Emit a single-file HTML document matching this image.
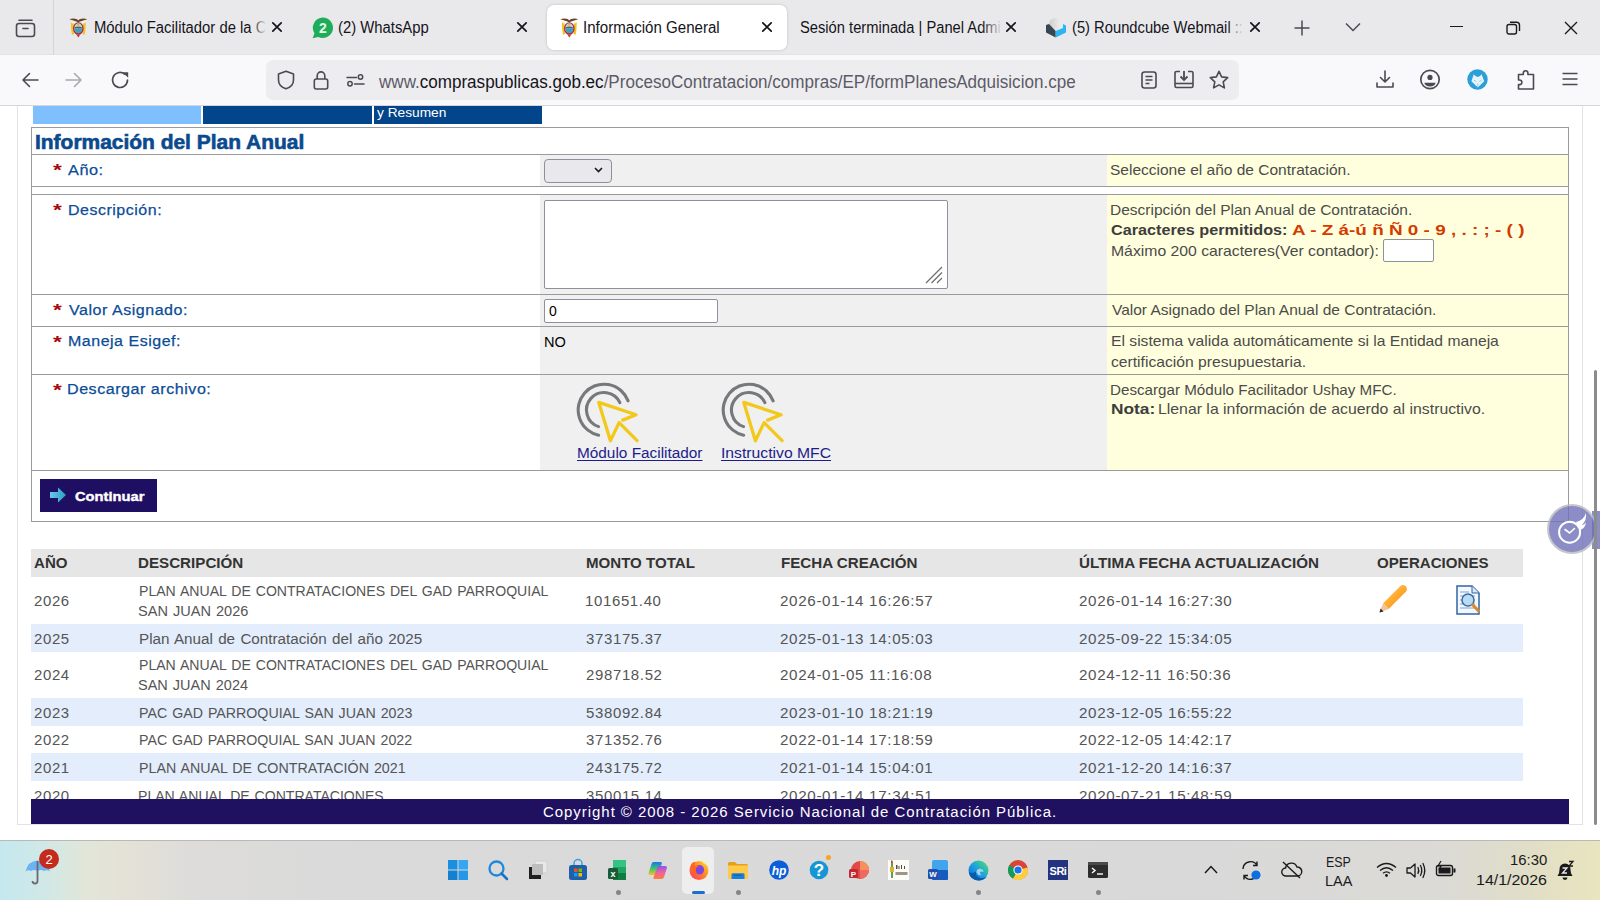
<!DOCTYPE html>
<html><head><meta charset="utf-8"><title>Información General</title><style>
*{margin:0;padding:0;box-sizing:border-box}
html,body{width:1600px;height:900px;overflow:hidden;background:#fff;position:relative;font-family:"Liberation Sans",sans-serif}
.a{position:absolute}
.t{position:absolute;white-space:nowrap;transform-origin:0 0}
svg{position:absolute;overflow:visible}
</style></head><body><div class="a" style="left:0px;top:0px;width:1600px;height:55px;background:#e9e9ec;"></div>
<div class="a" style="left:0px;top:54px;width:1600px;height:1px;background:#e2e2e5;"></div>
<div class="a" style="left:53px;top:0px;width:1px;height:55px;background:#d4d4d9;"></div>
<svg style="left:15px;top:17px" width="21" height="21" viewBox="0 0 21 21"><rect x="1.5" y="6.5" width="18" height="13" rx="2.5" fill="none" stroke="#4a4a52" stroke-width="1.6"/><path d="M4 3.2h13" stroke="#4a4a52" stroke-width="1.6" stroke-linecap="round"/><path d="M8 11.5h5" stroke="#4a4a52" stroke-width="1.6" stroke-linecap="round"/></svg>
<div class="a" style="left:547px;top:5px;width:240px;height:45px;background:#ffffff;border-radius:7px;box-shadow:0 0 3px rgba(0,0,0,.18)"></div>
<svg style="left:69px;top:17px" width="19" height="21" viewBox="0 0 19 21"><path d="M0.3 2.3Q4 0.8 8 2.2L9.3 3.5 10.6 2.2Q14.6 0.8 18.3 2.3 14 3.6 10.5 4.8L9.3 5.6 8.1 4.8Q4.6 3.6 0.3 2.3Z" fill="#6a4220"/><path d="M1.8 5.5 L4.5 5 L5 17 L3 18 Q1.8 12 1.8 5.5Z" fill="#efc321"/><path d="M16.8 5.5 L14.1 5 L13.6 17 L15.6 18 Q16.8 12 16.8 5.5Z" fill="#efc321"/><path d="M2 4.5L5 4 5.5 6 3 6.5Z M16.6 4.5L13.6 4 13.1 6 15.6 6.5Z" fill="#f4f4f4"/><ellipse cx="9.3" cy="11.5" rx="5.3" ry="6.3" fill="#a8283a"/><ellipse cx="9.3" cy="11.3" rx="4" ry="5" fill="#b9dce8"/><path d="M5.3 10.5Q9.3 8.5 13.3 10.5V11.5H5.3Z" fill="#7a5a38"/><path d="M5.4 11.5H13.2Q13 15.5 9.3 16.3 5.6 15.5 5.4 11.5Z" fill="#3b9fc8"/><path d="M7.3 17.5L9.3 20.5 11.3 17.5Z" fill="#d42a3a"/><ellipse cx="9.3" cy="7.7" rx="1.2" ry=".7" fill="#f0a020"/></svg>
<div id="tab1" class="t" style="left:93.95px;top:19.32px;font-size:15.8px;line-height:17px;color:#15141a;font-weight:400;font-family:'Liberation Sans', sans-serif;transform:scaleX(0.9395);">Módulo Facilitador de la C</div>
<div class="a" style="left:252px;top:15px;width:20px;height:25px;background:linear-gradient(90deg,rgba(233,233,236,0),#e9e9ec 70%);"></div>
<svg style="left:271.3px;top:21.4px" width="12" height="12" viewBox="0 0 12 12"><path d="M1.8 1.8L10.2 10.2M10.2 1.8L1.8 10.2" stroke="#15141a" stroke-width="1.7" stroke-linecap="round"/></svg>
<svg style="left:312px;top:16.5px" width="22" height="22" viewBox="0 0 22 22"><path d="M10.8 0.6A10.2 10.2 0 1 1 6.2 19.9L0.6 21.3 2.5 16.3A10.2 10.2 0 0 1 10.8 0.6Z" fill="#1fad5b"/><text x="11" y="15.6" text-anchor="middle" font-family="Liberation Sans" font-weight="700" font-size="14" fill="#e6fbe9">2</text></svg>
<div id="tab2" class="t" style="left:338.45px;top:19.32px;font-size:15.8px;line-height:17px;color:#15141a;font-weight:400;font-family:'Liberation Sans', sans-serif;transform:scaleX(0.9392);">(2) WhatsApp</div>
<svg style="left:516px;top:21.4px" width="12" height="12" viewBox="0 0 12 12"><path d="M1.8 1.8L10.2 10.2M10.2 1.8L1.8 10.2" stroke="#15141a" stroke-width="1.7" stroke-linecap="round"/></svg>
<svg style="left:560px;top:17px" width="19" height="21" viewBox="0 0 19 21"><path d="M0.3 2.3Q4 0.8 8 2.2L9.3 3.5 10.6 2.2Q14.6 0.8 18.3 2.3 14 3.6 10.5 4.8L9.3 5.6 8.1 4.8Q4.6 3.6 0.3 2.3Z" fill="#6a4220"/><path d="M1.8 5.5 L4.5 5 L5 17 L3 18 Q1.8 12 1.8 5.5Z" fill="#efc321"/><path d="M16.8 5.5 L14.1 5 L13.6 17 L15.6 18 Q16.8 12 16.8 5.5Z" fill="#efc321"/><path d="M2 4.5L5 4 5.5 6 3 6.5Z M16.6 4.5L13.6 4 13.1 6 15.6 6.5Z" fill="#f4f4f4"/><ellipse cx="9.3" cy="11.5" rx="5.3" ry="6.3" fill="#a8283a"/><ellipse cx="9.3" cy="11.3" rx="4" ry="5" fill="#b9dce8"/><path d="M5.3 10.5Q9.3 8.5 13.3 10.5V11.5H5.3Z" fill="#7a5a38"/><path d="M5.4 11.5H13.2Q13 15.5 9.3 16.3 5.6 15.5 5.4 11.5Z" fill="#3b9fc8"/><path d="M7.3 17.5L9.3 20.5 11.3 17.5Z" fill="#d42a3a"/><ellipse cx="9.3" cy="7.7" rx="1.2" ry=".7" fill="#f0a020"/></svg>
<div id="tab3" class="t" style="left:582.74px;top:19.32px;font-size:15.8px;line-height:17px;color:#15141a;font-weight:400;font-family:'Liberation Sans', sans-serif;transform:scaleX(0.9550);">Información General</div>
<svg style="left:761px;top:21.4px" width="12" height="12" viewBox="0 0 12 12"><path d="M1.8 1.8L10.2 10.2M10.2 1.8L1.8 10.2" stroke="#15141a" stroke-width="1.7" stroke-linecap="round"/></svg>
<div id="tab4" class="t" style="left:799.56px;top:19.32px;font-size:15.8px;line-height:17px;color:#15141a;font-weight:400;font-family:'Liberation Sans', sans-serif;transform:scaleX(0.9310);">Sesión terminada | Panel Admi</div>
<div class="a" style="left:982px;top:15px;width:24px;height:25px;background:linear-gradient(90deg,rgba(233,233,236,0),#e9e9ec 85%);"></div>
<svg style="left:1004.7px;top:21.4px" width="12" height="12" viewBox="0 0 12 12"><path d="M1.8 1.8L10.2 10.2M10.2 1.8L1.8 10.2" stroke="#15141a" stroke-width="1.7" stroke-linecap="round"/></svg>
<svg style="left:1045px;top:16px" width="22" height="23" viewBox="0 0 22 23"><defs><linearGradient id="rb" x1="0" x2="1"><stop offset="0" stop-color="#cfcfcf"/><stop offset="1" stop-color="#ececec"/></linearGradient></defs><circle cx="9.8" cy="7.5" r="5.6" fill="url(#rb)"/><path d="M1 9L4 8 10.7 15V21.5L1 16.5Z" fill="#37474f"/><path d="M10.7 15L18 12V8L21 9.5V16.5L10.7 21.5Z" fill="#2cb5f5"/></svg>
<div id="tab5" class="t" style="left:1071.50px;top:19.32px;font-size:15.8px;line-height:17px;color:#15141a;font-weight:400;font-family:'Liberation Sans', sans-serif;transform:scaleX(0.9331);">(5) Roundcube Webmail ::</div>
<div class="a" style="left:1228px;top:15px;width:18px;height:25px;background:linear-gradient(90deg,rgba(233,233,236,0),#e9e9ec 85%);"></div>
<svg style="left:1249px;top:21.4px" width="12" height="12" viewBox="0 0 12 12"><path d="M1.8 1.8L10.2 10.2M10.2 1.8L1.8 10.2" stroke="#15141a" stroke-width="1.7" stroke-linecap="round"/></svg>
<svg style="left:1294px;top:20px" width="16" height="16" viewBox="0 0 16 16"><path d="M8 .5V15.5M.5 8H15.5" stroke="#4a4a52" stroke-width="1.5"/></svg>
<svg style="left:1345px;top:22px" width="16" height="10" viewBox="0 0 16 10"><path d="M1 1.5L8 8.5L15 1.5" fill="none" stroke="#4a4a52" stroke-width="1.5"/></svg>
<div class="a" style="left:1450px;top:26px;width:13px;height:1.4px;background:#1a1a1a;"></div>
<svg style="left:1506px;top:21px" width="15" height="14" viewBox="0 0 15 14"><rect x="1" y="3.5" width="9.5" height="9.5" rx="2" fill="none" stroke="#1a1a1a" stroke-width="1.4"/><path d="M4 1.2h6.5a3 3 0 0 1 3 3V10" fill="none" stroke="#1a1a1a" stroke-width="1.4"/></svg>
<svg style="left:1564px;top:21px" width="14" height="14" viewBox="0 0 14 14"><path d="M1 1L13 13M13 1L1 13" stroke="#1a1a1a" stroke-width="1.4"/></svg>
<div class="a" style="left:0px;top:55px;width:1600px;height:50px;background:#f9f9fb;"></div>
<div class="a" style="left:0px;top:105px;width:1600px;height:1px;background:#d6d6da;"></div>
<svg style="left:21px;top:72px" width="18" height="16" viewBox="0 0 18 16"><path d="M17 8H2M8.5 1.5L2 8l6.5 6.5" fill="none" stroke="#4a4a52" stroke-width="1.6" stroke-linecap="round" stroke-linejoin="round"/></svg>
<svg style="left:65px;top:72px" width="18" height="16" viewBox="0 0 18 16"><path d="M1 8H16M9.5 1.5L16 8l-6.5 6.5" fill="none" stroke="#a9a9ae" stroke-width="1.6" stroke-linecap="round" stroke-linejoin="round"/></svg>
<svg style="left:111px;top:71px" width="19" height="18" viewBox="0 0 19 18"><path d="M16.5 9A7.5 7.5 0 1 1 13.5 3" fill="none" stroke="#4a4a52" stroke-width="1.7" stroke-linecap="round"/><path d="M11.5 1.2L17.2 1.2L17.2 6.8Z" fill="#4a4a52"/></svg>
<div class="a" style="left:266px;top:60px;width:973px;height:40px;background:#ededf0;border-radius:7px"></div>
<svg style="left:277px;top:70px" width="18" height="20" viewBox="0 0 18 20"><path d="M9 1.2L16.5 4V10C16.5 14.5 13 17.5 9 18.8 5 17.5 1.5 14.5 1.5 10V4Z" fill="none" stroke="#4a4a52" stroke-width="1.6" stroke-linejoin="round"/></svg>
<svg style="left:313px;top:70px" width="16" height="20" viewBox="0 0 16 20"><rect x="1.3" y="9" width="13.4" height="10" rx="2" fill="none" stroke="#4a4a52" stroke-width="1.6"/><path d="M4.2 9V5.7a3.8 3.8 0 0 1 7.6 0V9" fill="none" stroke="#4a4a52" stroke-width="1.6"/></svg>
<svg style="left:346px;top:74px" width="19" height="13" viewBox="0 0 19 13"><circle cx="14.5" cy="3" r="2.2" fill="none" stroke="#4a4a52" stroke-width="1.5"/><path d="M1 3.5H10.5M8.5 10H18" stroke="#4a4a52" stroke-width="1.5" stroke-linecap="round"/><circle cx="4" cy="9.8" r="2.2" fill="none" stroke="#4a4a52" stroke-width="1.5"/></svg>
<div id="url" class="t" style="left:378.79px;top:72.00px;font-size:17.5px;line-height:20px;color:#15141a;font-weight:400;font-family:'Liberation Sans', sans-serif;transform:scaleX(0.9744);"><span style="color:#5b5b66">www.</span>compraspublicas.gob.ec<span style="color:#5b5b66">/ProcesoContratacion/compras/EP/formPlanesAdquisicion.cpe</span></div>
<svg style="left:1141px;top:71px" width="16" height="18" viewBox="0 0 16 18"><rect x="1" y="1" width="14" height="16" rx="2.5" fill="none" stroke="#4a4a52" stroke-width="1.6"/><path d="M4.5 5.5h7M4.5 9h7M4.5 12.5h4" stroke="#4a4a52" stroke-width="1.6"/></svg>
<svg style="left:1174px;top:70px" width="20" height="19" viewBox="0 0 20 19"><path d="M6 1.5H2.5a1.5 1.5 0 0 0-1.5 1.5V16a1.5 1.5 0 0 0 1.5 1.5h15A1.5 1.5 0 0 0 19 16V3a1.5 1.5 0 0 0-1.5-1.5H14" fill="none" stroke="#4a4a52" stroke-width="1.6"/><path d="M1 13.5h18" stroke="#4a4a52" stroke-width="1.6"/><path d="M10 1v8.5M6.5 6.5L10 10l3.5-3.5" fill="none" stroke="#4a4a52" stroke-width="1.8"/></svg>
<svg style="left:1209px;top:70px" width="20" height="20" viewBox="0 0 20 20"><path d="M10 1.3l2.6 5.6 6.1.7-4.5 4.2 1.2 6.1L10 14.9l-5.4 3 1.2-6.1L1.3 7.6l6.1-.7Z" fill="none" stroke="#4a4a52" stroke-width="1.6" stroke-linejoin="round"/></svg>
<svg style="left:1376px;top:70px" width="18" height="19" viewBox="0 0 18 19"><path d="M9 1V12M4.5 7.5L9 12l4.5-4.5" fill="none" stroke="#4a4a52" stroke-width="1.6" stroke-linecap="round" stroke-linejoin="round"/><path d="M1 13v4h16v-4" fill="none" stroke="#4a4a52" stroke-width="1.6" stroke-linecap="round" stroke-linejoin="round"/></svg>
<svg style="left:1420px;top:69px" width="21" height="21" viewBox="0 0 21 21"><circle cx="10" cy="10.5" r="9.2" fill="none" stroke="#4a4a52" stroke-width="1.7"/><circle cx="10" cy="8.4" r="2.6" fill="#4a4a52"/><path d="M4.3 13.8H15.7Q14.6 17.6 10 17.6 5.4 17.6 4.3 13.8Z" fill="#4a4a52"/></svg>
<svg style="left:1467px;top:69px" width="21" height="21" viewBox="0 0 21 21"><circle cx="10.5" cy="10.5" r="10.2" fill="#2a9fd8"/><path d="M4.4 12.2L6.8 5.2Q8.5 7.9 10.7 7.9 12.9 7.9 14.6 5.2L17.2 12.2 10.8 18.5Z" fill="#e6f3fa"/><path d="M7 11.2L9.3 12.6M14.6 11.2L12.3 12.6M10.8 14.5V18" stroke="#9cc9e6" stroke-width="1"/></svg>
<svg style="left:1517px;top:69px" width="18" height="21" viewBox="0 0 18 21"><path d="M1.5 5.5H6.3V4a2.3 2.3 0 0 1 4.6 0V5.5H16.5V20H1.5V15.6H2.6a2.3 2.3 0 0 0 0-4.6H1.5Z" fill="none" stroke="#4a4a52" stroke-width="1.6" stroke-linejoin="round"/></svg>
<svg style="left:1562px;top:72px" width="16" height="14" viewBox="0 0 16 14"><path d="M.5 1.5h15M.5 7h15M.5 12.5h15" stroke="#4a4a52" stroke-width="1.6"/></svg>
<div class="a" style="left:17px;top:106px;width:1px;height:719px;background:#e3e3e3;"></div>
<div class="a" style="left:1582px;top:106px;width:1px;height:719px;background:#e3e3e3;"></div>
<div class="a" style="left:17px;top:824px;width:1566px;height:1px;background:#e3e3e3;"></div>
<div class="a" style="left:33px;top:106px;width:168px;height:18px;background:#80bffe;"></div>
<div class="a" style="left:203px;top:106px;width:169px;height:18px;background:#02458b;"></div>
<div class="a" style="left:374px;top:106px;width:168px;height:18px;background:#02458b;"></div>
<div id="yres" class="t" style="left:376.73px;top:105.00px;font-size:13px;line-height:15px;color:#ffffff;font-weight:400;font-family:'Liberation Sans', sans-serif;transform:scaleX(1.0546);">y Resumen</div>
<div class="a" style="left:31px;top:127px;width:1538px;height:395px;background:#ffffff;border:1px solid #9a9a9a"></div>
<div class="a" style="left:540px;top:155px;width:567px;height:31px;background:#f0f0f0;"></div>
<div class="a" style="left:1107px;top:155px;width:461px;height:31px;background:#ffffdd;"></div>
<div class="a" style="left:540px;top:195px;width:567px;height:99px;background:#f0f0f0;"></div>
<div class="a" style="left:1107px;top:195px;width:461px;height:99px;background:#ffffdd;"></div>
<div class="a" style="left:540px;top:295px;width:567px;height:31px;background:#f0f0f0;"></div>
<div class="a" style="left:1107px;top:295px;width:461px;height:31px;background:#ffffdd;"></div>
<div class="a" style="left:540px;top:327px;width:567px;height:47px;background:#f0f0f0;"></div>
<div class="a" style="left:1107px;top:327px;width:461px;height:47px;background:#ffffdd;"></div>
<div class="a" style="left:540px;top:375px;width:567px;height:95px;background:#f0f0f0;"></div>
<div class="a" style="left:1107px;top:375px;width:461px;height:95px;background:#ffffdd;"></div>
<div class="a" style="left:32px;top:154px;width:1536px;height:1px;background:#9a9a9a;"></div>
<div class="a" style="left:32px;top:186px;width:1536px;height:1px;background:#9a9a9a;"></div>
<div class="a" style="left:32px;top:194px;width:1536px;height:1px;background:#9a9a9a;"></div>
<div class="a" style="left:32px;top:294px;width:1536px;height:1px;background:#9a9a9a;"></div>
<div class="a" style="left:32px;top:326px;width:1536px;height:1px;background:#9a9a9a;"></div>
<div class="a" style="left:32px;top:374px;width:1536px;height:1px;background:#9a9a9a;"></div>
<div class="a" style="left:32px;top:470px;width:1536px;height:1px;background:#9a9a9a;"></div>
<div id="title" class="t" style="left:35.19px;top:130.50px;font-size:20px;line-height:22px;color:#0a4a8e;font-weight:700;font-family:'Liberation Sans', sans-serif;transform:scaleX(1.0472);-webkit-text-stroke:0.6px #0a4a8e">Información del Plan Anual</div>
<div id="astl1" class="t" style="left:53.32px;top:161.22px;font-size:17px;line-height:19px;color:#a80a0a;font-weight:700;font-family:'Liberation Sans', sans-serif;transform:scaleX(1.3331);">*</div>
<div id="l1" class="t" style="left:67.87px;top:160.72px;font-size:15.5px;line-height:17px;color:#0b4c97;font-weight:400;font-family:'Liberation Sans', sans-serif;transform:scaleX(1.0514);letter-spacing:0.5px;-webkit-text-stroke:0.25px #0b4c97">Año:</div>
<div id="astl2" class="t" style="left:53.32px;top:201.22px;font-size:17px;line-height:19px;color:#a80a0a;font-weight:700;font-family:'Liberation Sans', sans-serif;transform:scaleX(1.3331);">*</div>
<div id="l2" class="t" style="left:67.68px;top:200.72px;font-size:15.5px;line-height:17px;color:#0b4c97;font-weight:400;font-family:'Liberation Sans', sans-serif;transform:scaleX(1.0308);letter-spacing:0.5px;-webkit-text-stroke:0.25px #0b4c97">Descripción:</div>
<div id="astl3" class="t" style="left:53.32px;top:301.32px;font-size:17px;line-height:19px;color:#a80a0a;font-weight:700;font-family:'Liberation Sans', sans-serif;transform:scaleX(1.3331);">*</div>
<div id="l3" class="t" style="left:68.74px;top:300.82px;font-size:15.5px;line-height:17px;color:#0b4c97;font-weight:400;font-family:'Liberation Sans', sans-serif;transform:scaleX(1.0351);letter-spacing:0.5px;-webkit-text-stroke:0.25px #0b4c97">Valor Asignado:</div>
<div id="astl4" class="t" style="left:53.32px;top:332.82px;font-size:17px;line-height:19px;color:#a80a0a;font-weight:700;font-family:'Liberation Sans', sans-serif;transform:scaleX(1.3331);">*</div>
<div id="l4" class="t" style="left:67.67px;top:332.32px;font-size:15.5px;line-height:17px;color:#0b4c97;font-weight:400;font-family:'Liberation Sans', sans-serif;transform:scaleX(1.0315);letter-spacing:0.5px;-webkit-text-stroke:0.25px #0b4c97">Maneja Esigef:</div>
<div id="astl5" class="t" style="left:53.32px;top:380.60px;font-size:17px;line-height:19px;color:#a80a0a;font-weight:700;font-family:'Liberation Sans', sans-serif;transform:scaleX(1.3331);">*</div>
<div id="l5" class="t" style="left:67.39px;top:380.10px;font-size:15.5px;line-height:17px;color:#0b4c97;font-weight:400;font-family:'Liberation Sans', sans-serif;transform:scaleX(1.0378);letter-spacing:0.5px;-webkit-text-stroke:0.25px #0b4c97">Descargar archivo:</div>
<div class="a" style="left:544px;top:159px;width:68px;height:24px;background:#e9e9ed;border:1px solid #8f8f9d;border-radius:4px"></div>
<svg style="left:594px;top:167px" width="9" height="6" viewBox="0 0 9 6"><path d="M1 1L4.5 4.5L8 1" fill="none" stroke="#1a1a1a" stroke-width="1.6"/></svg>
<div class="a" style="left:544px;top:200px;width:404px;height:89px;background:#ffffff;border:1px solid #8f8f9d;border-radius:2px"></div>
<svg style="left:925px;top:266px" width="18" height="18" viewBox="0 0 18 18"><path d="M1 17L17 1M6.5 17L17 6.5M12 17L17 12" stroke="#6d6d6d" stroke-width="1.2"/></svg>
<div class="a" style="left:544px;top:299px;width:174px;height:24px;background:#ffffff;border:1px solid #8f8f9d;border-radius:2px"></div>
<div id="zero" class="t" style="left:549.02px;top:302.60px;font-size:14px;line-height:16px;color:#000000;font-weight:400;font-family:'Liberation Sans', sans-serif;">0</div>
<div id="no" class="t" style="left:543.78px;top:333.90px;font-size:14.5px;line-height:16px;color:#000000;font-weight:400;font-family:'Liberation Sans', sans-serif;transform:scaleX(1.0043);">NO</div>
<svg style="left:578px;top:382px" width="64" height="62" viewBox="0 0 64 62"><path d="M20.64 53.24A25.8 25.8 0 1 1 50.12 18.84" fill="none" stroke="#77787b" stroke-width="3.1" stroke-linecap="round"/><path d="M20.59 44.64A17.5 17.5 0 1 1 41.9 20.69" fill="none" stroke="#77787b" stroke-width="3.1" stroke-linecap="round"/><path d="M44.7 38.1L58 32.7 20.8 20.4 32.4 58.7 41.1 40.6 59.1 58.7" fill="none" stroke="#f3c81c" stroke-width="3.3" stroke-linejoin="round" stroke-linecap="round"/></svg>
<svg style="left:722.5px;top:382px" width="64" height="62" viewBox="0 0 64 62"><path d="M20.64 53.24A25.8 25.8 0 1 1 50.12 18.84" fill="none" stroke="#77787b" stroke-width="3.1" stroke-linecap="round"/><path d="M20.59 44.64A17.5 17.5 0 1 1 41.9 20.69" fill="none" stroke="#77787b" stroke-width="3.1" stroke-linecap="round"/><path d="M44.7 38.1L58 32.7 20.8 20.4 32.4 58.7 41.1 40.6 59.1 58.7" fill="none" stroke="#f3c81c" stroke-width="3.3" stroke-linejoin="round" stroke-linecap="round"/></svg>
<div id="lk1" class="t" style="left:576.81px;top:443.82px;font-size:15.5px;line-height:17px;color:#1c1c8a;font-weight:400;font-family:'Liberation Sans', sans-serif;transform:scaleX(0.9908);text-decoration-thickness:1px;text-underline-offset:2px"><u>Módulo Facilitador</u></div>
<div id="lk2" class="t" style="left:720.86px;top:443.82px;font-size:15.5px;line-height:17px;color:#1c1c8a;font-weight:400;font-family:'Liberation Sans', sans-serif;transform:scaleX(1.0139);text-decoration-thickness:1px;text-underline-offset:2px"><u>Instructivo MFC</u></div>
<div id="h1" class="t" style="left:1110.00px;top:160.72px;font-size:15px;line-height:17px;color:#4b4b4b;font-weight:400;font-family:'Liberation Sans', sans-serif;transform:scaleX(1.0338);">Seleccione el año de Contratación.</div>
<div id="h2a" class="t" style="left:1110.09px;top:200.72px;font-size:15px;line-height:17px;color:#4b4b4b;font-weight:400;font-family:'Liberation Sans', sans-serif;transform:scaleX(1.0328);">Descripción del Plan Anual de Contratación.</div>
<div id="h2b1" class="t" style="left:1110.99px;top:220.90px;font-size:15px;line-height:17px;color:#3d3d3d;font-weight:700;font-family:'Liberation Sans', sans-serif;transform:scaleX(1.0803);">Caracteres permitidos:</div>
<div id="h2b2" class="t" style="left:1291.74px;top:220.90px;font-size:15px;line-height:17px;color:#d53a00;font-weight:700;font-family:'Liberation Sans', sans-serif;transform:scaleX(1.2602);">A - Z á-ú ñ Ñ 0 - 9 , . : ; - ( )</div>
<div id="h2c" class="t" style="left:1110.52px;top:241.72px;font-size:15px;line-height:17px;color:#4b4b4b;font-weight:400;font-family:'Liberation Sans', sans-serif;transform:scaleX(1.0504);">Máximo 200 caracteres(Ver contador):</div>
<div class="a" style="left:1383px;top:239px;width:51px;height:23px;background:#ffffff;border:1px solid #8f8f9d;border-radius:2px"></div>
<div id="h3" class="t" style="left:1111.58px;top:301.00px;font-size:15px;line-height:17px;color:#4b4b4b;font-weight:400;font-family:'Liberation Sans', sans-serif;transform:scaleX(1.0328);">Valor Asignado del Plan Anual de Contratación.</div>
<div id="h4a" class="t" style="left:1110.55px;top:332.40px;font-size:15px;line-height:17px;color:#4b4b4b;font-weight:400;font-family:'Liberation Sans', sans-serif;transform:scaleX(1.0453);">El sistema valida automáticamente si la Entidad maneja</div>
<div id="h4b" class="t" style="left:1110.57px;top:352.60px;font-size:15px;line-height:17px;color:#4b4b4b;font-weight:400;font-family:'Liberation Sans', sans-serif;transform:scaleX(1.0442);">certificación presupuestaria.</div>
<div id="h5a" class="t" style="left:1110.32px;top:380.50px;font-size:15px;line-height:17px;color:#4b4b4b;font-weight:400;font-family:'Liberation Sans', sans-serif;transform:scaleX(1.0115);">Descargar Módulo Facilitador Ushay MFC.</div>
<div id="h5b1" class="t" style="left:1110.74px;top:400.00px;font-size:15px;line-height:17px;color:#3d3d3d;font-weight:700;font-family:'Liberation Sans', sans-serif;transform:scaleX(1.1537);">Nota:</div>
<div id="h5b2" class="t" style="left:1157.55px;top:400.00px;font-size:15px;line-height:17px;color:#4b4b4b;font-weight:400;font-family:'Liberation Sans', sans-serif;transform:scaleX(1.0547);">Llenar la información de acuerdo al instructivo.</div>
<div class="a" style="left:40px;top:479px;width:117px;height:33px;background:#1f0f63;"></div>
<svg style="left:49px;top:486px" width="18" height="18" viewBox="0 0 18 18"><defs><linearGradient id="ag" x1="0" x2="1"><stop offset="0" stop-color="#6cc8e6"/><stop offset="1" stop-color="#2a9ec9"/></linearGradient></defs><path d="M1 6H9V1.5L17 9 9 16.5V12H1Z" fill="url(#ag)"/></svg>
<div id="btn" class="t" style="left:75.45px;top:489.40px;font-size:13px;line-height:15px;color:#ffffff;font-weight:700;font-family:'Liberation Sans', sans-serif;transform:scaleX(1.1304);-webkit-text-stroke:0.4px #fff">Continuar</div>
<div class="a" style="left:1592px;top:511px;width:8px;height:38px;background:#7070b8;opacity:.8"></div>
<div class="a" style="left:1547px;top:504px;width:50px;height:50px;border-radius:50%;background:#7070b8;border:2.5px solid #b9b9bf;opacity:.8"></div>
<svg style="left:1556px;top:512px" width="40" height="34" viewBox="0 0 40 34"><circle cx="13.6" cy="20.2" r="10.5" fill="none" stroke="#fff" stroke-width="2"/><path d="M9 17.5L13.6 21 18.5 16.5" fill="none" stroke="#fff" stroke-width="1.6" stroke-linecap="round"/><path d="M20 10 Q28 8 30 1 Q31 8 26 13 Q30 12 30 9 Q30 16 24 18Z" fill="#fff"/></svg>
<div class="a" style="left:1594px;top:370px;width:3px;height:455px;background:#8c8c8c;border-radius:2px"></div>
<div class="a" style="left:31px;top:549px;width:1492px;height:27.5px;background:#e6e6e6;"></div>
<div id="th1" class="t" style="left:34.12px;top:554.60px;font-size:14.6px;line-height:16px;color:#333333;font-weight:700;font-family:'Liberation Sans', sans-serif;transform:scaleX(1.0320);">AÑO</div>
<div id="th2" class="t" style="left:138.49px;top:554.60px;font-size:14.6px;line-height:16px;color:#333333;font-weight:700;font-family:'Liberation Sans', sans-serif;transform:scaleX(1.0388);">DESCRIPCIÓN</div>
<div id="th3" class="t" style="left:585.54px;top:554.60px;font-size:14.6px;line-height:16px;color:#333333;font-weight:700;font-family:'Liberation Sans', sans-serif;transform:scaleX(1.0329);">MONTO TOTAL</div>
<div id="th4" class="t" style="left:780.70px;top:554.60px;font-size:14.6px;line-height:16px;color:#333333;font-weight:700;font-family:'Liberation Sans', sans-serif;transform:scaleX(1.0373);">FECHA CREACIÓN</div>
<div id="th5" class="t" style="left:1078.98px;top:554.60px;font-size:14.6px;line-height:16px;color:#333333;font-weight:700;font-family:'Liberation Sans', sans-serif;transform:scaleX(1.0398);">ÚLTIMA FECHA ACTUALIZACIÓN</div>
<div id="th6" class="t" style="left:1377.00px;top:554.60px;font-size:14.6px;line-height:16px;color:#333333;font-weight:700;font-family:'Liberation Sans', sans-serif;transform:scaleX(1.0346);">OPERACIONES</div>
<div id="r0y" class="t" style="left:34.00px;top:593.01px;font-size:14px;line-height:16px;color:#555555;font-weight:400;font-family:'Liberation Sans', sans-serif;transform:scaleX(1.0681);letter-spacing:0.6px">2026</div>
<div id="r0d0" class="t" style="left:138.76px;top:582.91px;font-size:14px;line-height:16px;color:#555555;font-weight:400;font-family:'Liberation Sans', sans-serif;transform:scaleX(1.0055);word-spacing:1px">PLAN ANUAL DE CONTRATACIONES DEL GAD PARROQUIAL</div>
<div id="r0d1" class="t" style="left:138.02px;top:602.71px;font-size:14px;line-height:16px;color:#555555;font-weight:400;font-family:'Liberation Sans', sans-serif;transform:scaleX(1.0385);word-spacing:1px">SAN JUAN 2026</div>
<div id="r0m" class="t" style="left:585.39px;top:593.01px;font-size:14px;line-height:16px;color:#555555;font-weight:400;font-family:'Liberation Sans', sans-serif;transform:scaleX(1.0698);letter-spacing:0.6px">101651.40</div>
<div id="r0c" class="t" style="left:779.92px;top:593.01px;font-size:14px;line-height:16px;color:#555555;font-weight:400;font-family:'Liberation Sans', sans-serif;transform:scaleX(1.0850);letter-spacing:0.6px">2026-01-14 16:26:57</div>
<div id="r0u" class="t" style="left:1079.28px;top:593.01px;font-size:14px;line-height:16px;color:#555555;font-weight:400;font-family:'Liberation Sans', sans-serif;transform:scaleX(1.0845);letter-spacing:0.6px">2026-01-14 16:27:30</div>
<div class="a" style="left:31px;top:624.2px;width:1492px;height:27.399999999999977px;background:#e3edfc;"></div>
<div id="r1y" class="t" style="left:34.00px;top:630.56px;font-size:14px;line-height:16px;color:#555555;font-weight:400;font-family:'Liberation Sans', sans-serif;transform:scaleX(1.0681);letter-spacing:0.6px">2025</div>
<div id="r1d0" class="t" style="left:138.82px;top:630.56px;font-size:14px;line-height:16px;color:#555555;font-weight:400;font-family:'Liberation Sans', sans-serif;transform:scaleX(1.0867);word-spacing:1px">Plan Anual de Contratación del año 2025</div>
<div id="r1m" class="t" style="left:585.79px;top:630.56px;font-size:14px;line-height:16px;color:#555555;font-weight:400;font-family:'Liberation Sans', sans-serif;transform:scaleX(1.0698);letter-spacing:0.6px">373175.37</div>
<div id="r1c" class="t" style="left:779.92px;top:630.56px;font-size:14px;line-height:16px;color:#555555;font-weight:400;font-family:'Liberation Sans', sans-serif;transform:scaleX(1.0850);letter-spacing:0.6px">2025-01-13 14:05:03</div>
<div id="r1u" class="t" style="left:1079.28px;top:630.56px;font-size:14px;line-height:16px;color:#555555;font-weight:400;font-family:'Liberation Sans', sans-serif;transform:scaleX(1.0845);letter-spacing:0.6px">2025-09-22 15:34:05</div>
<div id="r2y" class="t" style="left:34.00px;top:667.46px;font-size:14px;line-height:16px;color:#555555;font-weight:400;font-family:'Liberation Sans', sans-serif;transform:scaleX(1.0681);letter-spacing:0.6px">2024</div>
<div id="r2d0" class="t" style="left:138.76px;top:657.36px;font-size:14px;line-height:16px;color:#555555;font-weight:400;font-family:'Liberation Sans', sans-serif;transform:scaleX(1.0055);word-spacing:1px">PLAN ANUAL DE CONTRATACIONES DEL GAD PARROQUIAL</div>
<div id="r2d1" class="t" style="left:138.08px;top:677.16px;font-size:14px;line-height:16px;color:#555555;font-weight:400;font-family:'Liberation Sans', sans-serif;transform:scaleX(1.0356);word-spacing:1px">SAN JUAN 2024</div>
<div id="r2m" class="t" style="left:586.03px;top:667.46px;font-size:14px;line-height:16px;color:#555555;font-weight:400;font-family:'Liberation Sans', sans-serif;transform:scaleX(1.0698);letter-spacing:0.6px">298718.52</div>
<div id="r2c" class="t" style="left:779.92px;top:667.46px;font-size:14px;line-height:16px;color:#555555;font-weight:400;font-family:'Liberation Sans', sans-serif;transform:scaleX(1.0850);letter-spacing:0.6px">2024-01-05 11:16:08</div>
<div id="r2u" class="t" style="left:1079.28px;top:667.46px;font-size:14px;line-height:16px;color:#555555;font-weight:400;font-family:'Liberation Sans', sans-serif;transform:scaleX(1.0845);letter-spacing:0.6px">2024-12-11 16:50:36</div>
<div class="a" style="left:31px;top:698px;width:1492px;height:28px;background:#e3edfc;"></div>
<div id="r3y" class="t" style="left:34.00px;top:704.97px;font-size:14px;line-height:16px;color:#555555;font-weight:400;font-family:'Liberation Sans', sans-serif;transform:scaleX(1.0681);letter-spacing:0.6px">2023</div>
<div id="r3d0" class="t" style="left:138.90px;top:704.97px;font-size:14px;line-height:16px;color:#555555;font-weight:400;font-family:'Liberation Sans', sans-serif;transform:scaleX(1.0150);word-spacing:1px">PAC GAD PARROQUIAL SAN JUAN 2023</div>
<div id="r3m" class="t" style="left:586.15px;top:704.97px;font-size:14px;line-height:16px;color:#555555;font-weight:400;font-family:'Liberation Sans', sans-serif;transform:scaleX(1.0698);letter-spacing:0.6px">538092.84</div>
<div id="r3c" class="t" style="left:779.92px;top:704.97px;font-size:14px;line-height:16px;color:#555555;font-weight:400;font-family:'Liberation Sans', sans-serif;transform:scaleX(1.0850);letter-spacing:0.6px">2023-01-10 18:21:19</div>
<div id="r3u" class="t" style="left:1079.28px;top:704.97px;font-size:14px;line-height:16px;color:#555555;font-weight:400;font-family:'Liberation Sans', sans-serif;transform:scaleX(1.0845);letter-spacing:0.6px">2023-12-05 16:55:22</div>
<div id="r4y" class="t" style="left:34.00px;top:732.47px;font-size:14px;line-height:16px;color:#555555;font-weight:400;font-family:'Liberation Sans', sans-serif;transform:scaleX(1.0681);letter-spacing:0.6px">2022</div>
<div id="r4d0" class="t" style="left:138.94px;top:732.47px;font-size:14px;line-height:16px;color:#555555;font-weight:400;font-family:'Liberation Sans', sans-serif;transform:scaleX(1.0142);word-spacing:1px">PAC GAD PARROQUIAL SAN JUAN 2022</div>
<div id="r4m" class="t" style="left:585.79px;top:732.47px;font-size:14px;line-height:16px;color:#555555;font-weight:400;font-family:'Liberation Sans', sans-serif;transform:scaleX(1.0698);letter-spacing:0.6px">371352.76</div>
<div id="r4c" class="t" style="left:779.92px;top:732.47px;font-size:14px;line-height:16px;color:#555555;font-weight:400;font-family:'Liberation Sans', sans-serif;transform:scaleX(1.0850);letter-spacing:0.6px">2022-01-14 17:18:59</div>
<div id="r4u" class="t" style="left:1079.28px;top:732.47px;font-size:14px;line-height:16px;color:#555555;font-weight:400;font-family:'Liberation Sans', sans-serif;transform:scaleX(1.0845);letter-spacing:0.6px">2022-12-05 14:42:17</div>
<div class="a" style="left:31px;top:753px;width:1492px;height:28px;background:#e3edfc;"></div>
<div id="r5y" class="t" style="left:34.00px;top:759.97px;font-size:14px;line-height:16px;color:#555555;font-weight:400;font-family:'Liberation Sans', sans-serif;transform:scaleX(1.0681);letter-spacing:0.6px">2021</div>
<div id="r5d0" class="t" style="left:138.90px;top:759.97px;font-size:14px;line-height:16px;color:#555555;font-weight:400;font-family:'Liberation Sans', sans-serif;transform:scaleX(1.0173);word-spacing:1px">PLAN ANUAL DE CONTRATACIÓN 2021</div>
<div id="r5m" class="t" style="left:586.03px;top:759.97px;font-size:14px;line-height:16px;color:#555555;font-weight:400;font-family:'Liberation Sans', sans-serif;transform:scaleX(1.0698);letter-spacing:0.6px">243175.72</div>
<div id="r5c" class="t" style="left:779.92px;top:759.97px;font-size:14px;line-height:16px;color:#555555;font-weight:400;font-family:'Liberation Sans', sans-serif;transform:scaleX(1.0850);letter-spacing:0.6px">2021-01-14 15:04:01</div>
<div id="r5u" class="t" style="left:1079.28px;top:759.97px;font-size:14px;line-height:16px;color:#555555;font-weight:400;font-family:'Liberation Sans', sans-serif;transform:scaleX(1.0845);letter-spacing:0.6px">2021-12-20 14:16:37</div>
<div id="r6y" class="t" style="left:34.00px;top:787.50px;font-size:14px;line-height:16px;color:#555555;font-weight:400;font-family:'Liberation Sans', sans-serif;transform:scaleX(1.0681);letter-spacing:0.6px">2020</div>
<div id="r6d0" class="t" style="left:138.46px;top:787.50px;font-size:14px;line-height:16px;color:#555555;font-weight:400;font-family:'Liberation Sans', sans-serif;transform:scaleX(1.0042);word-spacing:1px">PLAN ANUAL DE CONTRATACIONES</div>
<div id="r6m" class="t" style="left:585.79px;top:787.50px;font-size:14px;line-height:16px;color:#555555;font-weight:400;font-family:'Liberation Sans', sans-serif;transform:scaleX(1.0698);letter-spacing:0.6px">350015.14</div>
<div id="r6c" class="t" style="left:779.92px;top:787.50px;font-size:14px;line-height:16px;color:#555555;font-weight:400;font-family:'Liberation Sans', sans-serif;transform:scaleX(1.0850);letter-spacing:0.6px">2020-01-14 17:34:51</div>
<div id="r6u" class="t" style="left:1079.28px;top:787.50px;font-size:14px;line-height:16px;color:#555555;font-weight:400;font-family:'Liberation Sans', sans-serif;transform:scaleX(1.0845);letter-spacing:0.6px">2020-07-21 15:48:59</div>
<svg style="left:1378px;top:585px" width="30" height="30" viewBox="0 0 30 30"><defs><linearGradient id="pg" x1="0" y1="0" x2="1" y2="1"><stop offset="0" stop-color="#ffd066"/><stop offset=".5" stop-color="#ffab2e"/><stop offset="1" stop-color="#f08416"/></linearGradient></defs><path d="M5.1 18.3L22.2 1.2Q25 -1 27.8 1.2Q30 4 27.8 6.8L10.7 23.9Z" fill="url(#pg)"/><path d="M5.1 18.3L10.7 23.9 1.5 27.5Z" fill="#eec3a0"/><path d="M1.5 27.5L2.6 23.5 5.5 26.4Z" fill="#2a2a2a"/></svg>
<svg style="left:1456px;top:585px" width="27" height="30" viewBox="0 0 27 30"><path d="M1 1H16L23 8V29H1Z" fill="#f4f8fd" stroke="#2f65a8" stroke-width="1.5"/><path d="M16 1V8H23" fill="#dfe9f5" stroke="#2f65a8" stroke-width="1"/><path d="M4 7h9M4 11h15M4 15h15M4 19h15M4 23h15" stroke="#7fa6d3" stroke-width="1.2"/><circle cx="12" cy="15" r="6" fill="#b9dcf5" stroke="#3c6aa5" stroke-width="1.5"/><path d="M16.5 19.5L22.5 26" stroke="#d98a2a" stroke-width="3" stroke-linecap="round"/></svg>
<div class="a" style="left:31px;top:799px;width:1538px;height:25px;background:#1f1060;"></div>
<div id="foot" class="t" style="left:543.07px;top:804.32px;font-size:14px;line-height:16px;color:#ffffff;font-weight:400;font-family:'Liberation Sans', sans-serif;transform:scaleX(1.0696);letter-spacing:0.9px">Copyright © 2008 - 2026 Servicio Nacional de Contratación Pública.</div>
<div class="a" style="left:0px;top:825px;width:1600px;height:15px;background:#ffffff;"></div>
<div class="a" style="left:0px;top:840px;width:1600px;height:60px;background:linear-gradient(90deg,#c4e8ef 0%,#cfe8e8 2.5%,#e2e6d8 5.5%,#e4e1d6 8%,#dddcda 12%,#dadada 20%,#d9d9d9 75%,#dbdad6 90%,#e0ddc8 95%,#e9e5bf 100%);"></div>
<div class="a" style="left:0px;top:840px;width:1600px;height:1px;background:#b9b9b9;"></div>
<svg style="left:25px;top:855px" width="30" height="30" viewBox="0 0 30 30"><path d="M0.5 16.5Q3 6 12.5 5.5 22 6 25 16.5 22 14.5 19 16 16 14 12.5 16 9 14 6 16 3 14.5 0.5 16.5Z" fill="#6bb3f2"/><path d="M12.5 6V26a2.5 2.5 0 0 1-5 0" fill="none" stroke="#6b6b6b" stroke-width="1.8"/></svg>
<svg style="left:38px;top:848px" width="22" height="22" viewBox="0 0 22 22"><circle cx="11" cy="11" r="10" fill="#c42b1c"/><text x="11" y="15.5" text-anchor="middle" font-family="Liberation Sans" font-size="13" fill="#fff">2</text></svg>
<svg style="left:447.5px;top:860px" width="20" height="20" viewBox="0 0 20 20"><rect x="0" y="0" width="9.5" height="9.5" fill="#1a8fe0"/><rect x="10.5" y="0" width="9.5" height="9.5" fill="#35a6f0"/><rect x="0" y="10.5" width="9.5" height="9.5" fill="#1580d2"/><rect x="10.5" y="10.5" width="9.5" height="9.5" fill="#2596e8"/></svg>
<svg style="left:488px;top:860px" width="20" height="20" viewBox="0 0 20 20"><circle cx="8.5" cy="8.5" r="7" fill="none" stroke="#1e88e0" stroke-width="2.3"/><path d="M13.5 13.5L19 19" stroke="#1e6fc0" stroke-width="2.5" stroke-linecap="round"/></svg>
<svg style="left:528px;top:860px" width="20" height="20" viewBox="0 0 20 20"><rect x="7" y="1" width="12" height="12" fill="#e8e8e8" stroke="#cfcfcf"/><rect x="1" y="7" width="12" height="12" fill="#1f1f1f"/><rect x="4" y="4" width="11" height="11" fill="#bdbdbd"/></svg>
<svg style="left:568px;top:860px" width="20" height="20" viewBox="0 0 20 20"><path d="M6 5V3.5a4 4 0 0 1 8 0V5" fill="none" stroke="#3aa0e8" stroke-width="1.5"/><rect x="1" y="5" width="18" height="15" rx="2.5" fill="#1f5ea8"/><rect x="6" y="8.5" width="3.5" height="3.5" fill="#f25022"/><rect x="10.5" y="8.5" width="3.5" height="3.5" fill="#7fba00"/><rect x="6" y="13" width="3.5" height="3.5" fill="#00a4ef"/><rect x="10.5" y="13" width="3.5" height="3.5" fill="#ffb900"/></svg>
<svg style="left:608px;top:860px" width="19" height="20" viewBox="0 0 19 20"><rect x="5" y="0" width="13" height="20" rx="1.5" fill="#21a366"/><rect x="5" y="0" width="13" height="7" fill="#33c481"/><rect x="5" y="13" width="13" height="7" fill="#107c41"/><rect x="0" y="8" width="10" height="11" rx="1.5" fill="#185c37"/><text x="5" y="16.5" text-anchor="middle" font-family="Liberation Sans" font-weight="700" font-size="9" fill="#fff">x</text></svg>
<svg style="left:648px;top:861px" width="20" height="19" viewBox="0 0 20 19"><defs><linearGradient id="cpl" x1="0" y1="0" x2="0" y2="1"><stop offset="0" stop-color="#1f6ff0"/><stop offset=".45" stop-color="#2fc27a"/><stop offset="1" stop-color="#f7c21c"/></linearGradient><linearGradient id="cpr" x1="0" y1="0" x2="0" y2="1"><stop offset="0" stop-color="#8a4ff0"/><stop offset=".5" stop-color="#f05aa0"/><stop offset="1" stop-color="#ff7a2a"/></linearGradient></defs><path d="M5.5 1H12.5Q14.5 1 13.8 3L9 14H2Q0 14 0.8 11.5L3.5 3Q4.2 1 5.5 1Z" fill="url(#cpl)"/><path d="M10 5H17Q19.5 5 18.8 7.5L16 16Q15.3 18 13.5 18H6.5Q5 18 5.5 16.5Z" fill="url(#cpr)" opacity=".95"/></svg>
<div class="a" style="left:682px;top:847px;width:32px;height:47px;background:rgba(255,255,255,.55);border-radius:5px"></div>
<div class="a" style="left:692px;top:890.5px;width:13px;height:3px;background:#1c6fd0;border-radius:2px"></div>
<svg style="left:688.5px;top:859.5px" width="20" height="20" viewBox="0 0 20 20"><defs><linearGradient id="ffg" x1="1" y1="0" x2="0" y2="1"><stop offset="0" stop-color="#ffe03a"/><stop offset=".45" stop-color="#ff8a1e"/><stop offset="1" stop-color="#ff2f6a"/></linearGradient></defs><circle cx="10" cy="10.5" r="9.5" fill="url(#ffg)"/><circle cx="10.3" cy="9.8" r="4.8" fill="#7b45e6"/><path d="M1.5 6Q3 1.5 6.5 2 4.5 4 6 6.5 8.5 5 11 6 7 6.5 6.8 10 6.8 13.5 10.5 14.8 5 15.5 3.5 11.5Z" fill="#ff6420"/><path d="M12 0.5Q17 2.5 19 8 18 4.5 14.5 3.5Z" fill="#ffec5a"/></svg>
<svg style="left:728px;top:862px" width="20" height="17" viewBox="0 0 20 17"><path d="M0 1.5Q0 0 1.5 0H7L9 2H18.5Q20 2 20 3.5V17H0Z" fill="#e3a21a"/><path d="M0 3.5H20V17H0Z" fill="#ffc94a"/><path d="M3.5 17V12.5Q3.5 11.2 4.8 11.2H15.2Q16.5 11.2 16.5 12.5V17Z" fill="#1a7fd8"/><path d="M6 13.2H14" stroke="#0f5aa8" stroke-width="1"/></svg>
<svg style="left:768.5px;top:860px" width="20" height="20" viewBox="0 0 20 20"><circle cx="10" cy="10" r="9.8" fill="#0b5ed7"/><text x="10" y="14.5" text-anchor="middle" font-family="Liberation Sans" font-style="italic" font-weight="700" font-size="12" fill="#fff">hp</text></svg>
<svg style="left:808.5px;top:860px" width="20" height="20" viewBox="0 0 20 20"><circle cx="10" cy="10" r="9.3" fill="#1796d6"/><text x="10" y="16.3" text-anchor="middle" font-family="Liberation Sans" font-weight="700" font-size="17" fill="#fff">?</text></svg>
<div class="a" style="left:826px;top:855px;width:5px;height:5px;border-radius:50%;background:#f5a623"></div>
<svg style="left:848.5px;top:860px" width="20" height="20" viewBox="0 0 20 20"><circle cx="11" cy="10" r="9" fill="#e2484a"/><path d="M11 1A9 9 0 0 1 20 10H11Z" fill="#f7905a"/><path d="M11 10H20A9 9 0 0 1 11 19Z" fill="#ee6a60"/><rect x="0" y="9" width="9" height="9" rx="1.5" fill="#c1272d"/><text x="4.5" y="16.5" text-anchor="middle" font-family="Liberation Sans" font-weight="700" font-size="8" fill="#fff">P</text></svg>
<svg style="left:888px;top:860px" width="21" height="20" viewBox="0 0 21 20"><rect x="0" y="0" width="21" height="20" fill="#fbfbf7"/><path d="M3 2L4 1 5 2V18H3Z" fill="#6f9a4a"/><rect x="2" y="7" width="4" height="5" fill="#d8b23a"/><rect x="3" y="0.5" width="1.5" height="2.5" fill="#c8402a"/><path d="M8 5h1.5v4H8zM10.5 6h1v3h-1zM13 5h1v4h-1zM16 6h1v3h-1z" fill="#5a4a3a"/><path d="M7.5 12h12v3h-12z" fill="#8a7a6a" opacity=".8"/></svg>
<svg style="left:928px;top:860px" width="20" height="20" viewBox="0 0 20 20"><rect x="4" y="0" width="16" height="20" rx="2" fill="#41a5ee"/><rect x="4" y="10" width="16" height="10" rx="1" fill="#185abd"/><rect x="0" y="9" width="10" height="10" rx="1.5" fill="#1e4faa"/><text x="5" y="17" text-anchor="middle" font-family="Liberation Sans" font-weight="700" font-size="8" fill="#fff">W</text></svg>
<svg style="left:968px;top:860px" width="21" height="21" viewBox="0 0 21 21"><defs><linearGradient id="edg" x1="0" y1="1" x2="1" y2="0"><stop offset="0" stop-color="#0c5fb8"/><stop offset=".45" stop-color="#1a9ae6"/><stop offset=".75" stop-color="#35c4a0"/><stop offset="1" stop-color="#7ade5a"/></linearGradient></defs><circle cx="10.5" cy="10.5" r="10" fill="url(#edg)"/><path d="M0.8 12Q2 20 10.5 20.5 16 20.5 19 16.5 15 19 11 17.5 7 15.5 8 11.5 5 14 0.8 12Z" fill="#0a5aa8"/><path d="M8.5 12.5Q8.5 8.5 12.5 8.8 15.5 9.3 15.5 12 13.5 11 12 12.5 11.8 14.5 14 15 10 16 8.5 12.5Z" fill="#9fd4ef"/></svg>
<svg style="left:1008px;top:860px" width="20" height="20" viewBox="0 0 20 20"><circle cx="10" cy="10" r="10" fill="#db4437"/><path d="M10 10L1.3 5A10 10 0 0 0 5 18.7Z" fill="#0f9d58"/><path d="M10 10L5 18.7A10 10 0 0 0 19.6 7.5Z" fill="#ffcd40"/><circle cx="10" cy="10" r="4.6" fill="#fff"/><circle cx="10" cy="10" r="3.6" fill="#1a73e8"/></svg>
<svg style="left:1048px;top:860px" width="20" height="20" viewBox="0 0 20 20"><rect x="0" y="0" width="20" height="20" fill="#24337f"/><text x="10" y="15" text-anchor="middle" font-family="Liberation Sans" font-weight="700" font-size="11" fill="#fff" letter-spacing="-0.5">SRi</text></svg>
<svg style="left:1088px;top:860px" width="20" height="20" viewBox="0 0 20 20"><rect x="0" y="2" width="20" height="16" rx="1.5" fill="#2d2d2d"/><rect x="0" y="2" width="20" height="3" fill="#4a4a4a"/><path d="M4 8l3 2.5-3 2.5" fill="none" stroke="#fff" stroke-width="1.4"/><path d="M9 14h6" stroke="#fff" stroke-width="1.4"/></svg>
<div class="a" style="left:615.5px;top:889.5px;width:5px;height:5px;border-radius:50%;background:#858585"></div>
<div class="a" style="left:735.5px;top:889.5px;width:5px;height:5px;border-radius:50%;background:#858585"></div>
<div class="a" style="left:975.5px;top:889.5px;width:5px;height:5px;border-radius:50%;background:#858585"></div>
<div class="a" style="left:1095.5px;top:889.5px;width:5px;height:5px;border-radius:50%;background:#858585"></div>
<svg style="left:1204px;top:865px" width="14" height="9" viewBox="0 0 14 9"><path d="M1 8L7 1.5 13 8" fill="none" stroke="#1a1a1a" stroke-width="1.5"/></svg>
<svg style="left:1240px;top:860px" width="22" height="21" viewBox="0 0 22 21"><path d="M3 9A7.5 7.5 0 0 1 17 5.5M17 1.5V5.5H13" fill="none" stroke="#1a1a1a" stroke-width="1.4"/><path d="M18 12A7.5 7.5 0 0 1 4 15.5M4 19.5V15.5H8" fill="none" stroke="#1a1a1a" stroke-width="1.4"/><circle cx="16" cy="15" r="4.6" fill="#0f6fe0"/></svg>
<svg style="left:1281px;top:861px" width="21" height="18" viewBox="0 0 21 18"><path d="M5 15a4 4 0 0 1-.5-8 6 6 0 0 1 11.5-1 4.5 4.5 0 0 1 .5 9Z" fill="none" stroke="#1a1a1a" stroke-width="1.4"/><path d="M2 1L19 17" stroke="#1a1a1a" stroke-width="1.4"/></svg>
<div id="esp" class="t" style="left:1326.34px;top:854.00px;font-size:14px;line-height:16px;color:#1a1a1a;font-weight:400;font-family:'Liberation Sans', sans-serif;transform:scaleX(0.8872);">ESP</div>
<div id="laa" class="t" style="left:1325.00px;top:872.60px;font-size:14px;line-height:16px;color:#1a1a1a;font-weight:400;font-family:'Liberation Sans', sans-serif;transform:scaleX(1.0346);">LAA</div>
<svg style="left:1376px;top:862px" width="21" height="15" viewBox="0 0 21 15"><path d="M1 5.5Q10.5 -2.5 20 5.5M4 8.5Q10.5 3 17 8.5M7 11.3Q10.5 8.5 14 11.3" fill="none" stroke="#1a1a1a" stroke-width="1.4"/><circle cx="10.5" cy="13.5" r="1.4" fill="#1a1a1a"/></svg>
<svg style="left:1406px;top:862px" width="21" height="17" viewBox="0 0 21 17"><path d="M1 6h3.5L9 2v13L4.5 11H1Z" fill="none" stroke="#1a1a1a" stroke-width="1.3" stroke-linejoin="round"/><path d="M12 5.5Q13.5 8.5 12 11.5M14.5 3.5Q17 8.5 14.5 13.5M17 1.5Q20.5 8.5 17 15.5" fill="none" stroke="#1a1a1a" stroke-width="1.3" stroke-linecap="round"/></svg>
<svg style="left:1435px;top:861px" width="22" height="16" viewBox="0 0 22 16"><rect x="1.5" y="4.5" width="16" height="10" rx="2" fill="none" stroke="#1a1a1a" stroke-width="1.4"/><rect x="3.5" y="6.5" width="12" height="6" fill="#1a1a1a"/><rect x="18.5" y="7.5" width="2" height="4" fill="#1a1a1a"/><path d="M6 0L3 5h3l-2 4" fill="none" stroke="#1a1a1a" stroke-width="1.2"/></svg>
<div id="clk1" class="t" style="left:1509.53px;top:852.10px;font-size:14px;line-height:16px;color:#1a1a1a;font-weight:400;font-family:'Liberation Sans', sans-serif;transform:scaleX(1.0635);">16:30</div>
<div id="clk2" class="t" style="left:1475.82px;top:871.90px;font-size:14px;line-height:16px;color:#1a1a1a;font-weight:400;font-family:'Liberation Sans', sans-serif;transform:scaleX(1.1399);">14/1/2026</div>
<svg style="left:1556px;top:860px" width="21" height="21" viewBox="0 0 21 21"><path d="M1.5 16Q3.5 14 3.5 9.5 3.5 4 9 3.5 14.5 4 14.5 9.5 14.5 14 16.5 16Z" fill="#1a1a1a"/><path d="M6.5 17.5a2.5 2.5 0 0 0 5 0" fill="#1a1a1a"/><path d="M6.5 8H11L6.5 13H11" fill="none" stroke="#e8e8e8" stroke-width="1.3"/><path d="M13 1.5H17L13 6H17" fill="none" stroke="#1a1a1a" stroke-width="1.3"/></svg></body></html>
